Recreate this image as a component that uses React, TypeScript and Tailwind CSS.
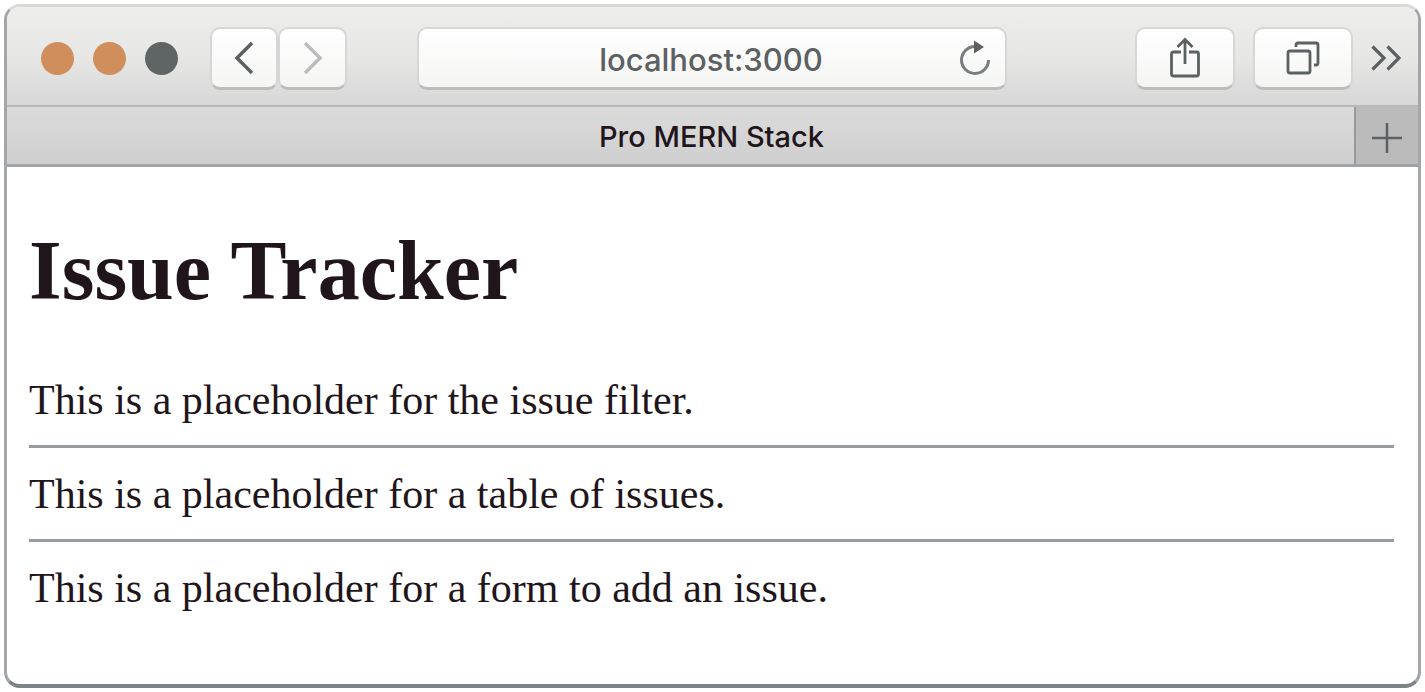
import { useState } from 'react';

const toolButton =
  'flex h-[63px] items-center justify-center rounded-[10px] border-2 border-b-[3px] border-[#d6d6d6] border-b-[#bcbcbc] bg-gradient-to-b from-white to-[#f5f5f4]';

function BackIcon() {
  return (
    <svg width="20" height="34" viewBox="0 0 20 34" fill="none" stroke="#5b6062" strokeWidth="3.500" aria-hidden="true">
      <path d="M18 2 3 17l15 15" />
    </svg>
  );
}

function ForwardIcon() {
  return (
    <svg width="20" height="34" viewBox="0 0 20 34" fill="none" stroke="#bcbcbc" strokeWidth="3.500" aria-hidden="true">
      <path d="m2 2 15 15L2 32" />
    </svg>
  );
}

function ReloadIcon() {
  return (
    <svg width="32" height="38" viewBox="0 0 32 38" aria-hidden="true">
      <path d="M16 7.500A13.500 13.500 0 1 0 29.500 21" fill="none" stroke="#777c7f" strokeWidth="3" />
      <path d="M15 1.500v13l10-6.500z" fill="#5b6062" />
    </svg>
  );
}

function ShareIcon() {
  return (
    <svg width="32" height="42" viewBox="0 0 32 42" fill="none" stroke="#5b6062" strokeWidth="2.800" aria-hidden="true">
      <path d="M12 15H4.500q-2 0-2 2v20q0 2 2 2h23q2 0 2-2V17q0-2-2-2H20" />
      <path d="M16 27V2M8.500 10 16 2.500l7.500 7.500" />
    </svg>
  );
}

function TabsIcon() {
  return (
    <svg width="34" height="34" viewBox="0 0 34 34" fill="none" stroke="#5b6062" strokeWidth="2.800" aria-hidden="true">
      <rect x="2" y="10" width="22" height="22" rx="2" />
      <path d="M10 6V4q0-2 2-2h18q2 0 2 2v18q0 2-2 2h-2" />
    </svg>
  );
}

function MoreIcon() {
  return (
    <svg width="30" height="26" viewBox="0 0 30 26" fill="none" stroke="#5b6062" strokeWidth="3.200" aria-hidden="true">
      <path d="m1.500 1.500 11.500 11.500L1.500 24.500M16.500 1.500 28 13 16.500 24.500" />
    </svg>
  );
}

function Toolbar() {
  const [address, setAddress] = useState('localhost:3000');
  return (
    <header className="flex h-[100px] items-center border-b-2 border-[#b9b9b9] bg-gradient-to-b from-[#ededec] via-[#e7e7e6] to-[#d7d7d7] pl-[34px] pr-[17px] pt-[4px]">
      <div className="flex gap-[19px]">
        <button aria-label="Close" className="size-[33px] rounded-full bg-[#d08e5c]" />
        <button aria-label="Minimize" className="size-[33px] rounded-full bg-[#d08e5c]" />
        <button aria-label="Zoom" className="size-[33px] rounded-full bg-[#5f6465]" />
      </div>
      <nav className="ml-8 flex">
        <button aria-label="Back" className={`${toolButton} w-[68px]`}>
          <BackIcon />
        </button>
        <button aria-label="Forward" className={`${toolButton} w-[69px]`}>
          <ForwardIcon />
        </button>
      </nav>
      <div className={`${toolButton} ml-[70px] mr-32 min-w-0 flex-1 pl-[46px] pr-3`}>
        <input
          aria-label="Address"
          value={address}
          onChange={(e) => setAddress(e.target.value)}
          className="min-w-0 flex-1 bg-transparent pt-1 text-center text-[31px] font-medium leading-10 text-[#5b6062] outline-none"
        />
        <button aria-label="Reload" className="flex w-9 justify-center">
          <ReloadIcon />
        </button>
      </div>
      <div className="flex items-center gap-[18px]">
        <button aria-label="Share" className={`${toolButton} w-[100px]`}>
          <ShareIcon />
        </button>
        <button aria-label="Show all tabs" className={`${toolButton} w-[100px]`}>
          <TabsIcon />
        </button>
        <button aria-label="More tools">
          <MoreIcon />
        </button>
      </div>
    </header>
  );
}

function TabBar() {
  return (
    <div className="flex h-[60px] border-b-[3px] border-[#a0a3a5] bg-gradient-to-b from-[#dbdbdb] to-[#cfcfcf]">
      <button className="flex-1 pl-[62px] pt-[2px] text-center text-[29px] font-medium leading-9 text-[#1f151b]">
        Pro MERN Stack
      </button>
      <button
        aria-label="New tab"
        className="flex w-16 items-center justify-center border-l-2 border-[#959a9d] bg-[#bbbbbb] pt-[4px]"
      >
        <svg width="30" height="30" viewBox="0 0 30 30" stroke="#5b6062" strokeWidth="2.500" aria-hidden="true">
          <path d="M15 0v30M0 15h30" />
        </svg>
      </button>
    </div>
  );
}

export default function App() {
  return (
    <div className="min-h-screen bg-white px-1 pb-1 pt-1 font-['Inter',sans-serif]">
      <div className="overflow-hidden rounded-[16px] border-[3px] border-b-4 border-[#a3a7aa] border-b-[#7e8386] border-t-[#d9d9d9] bg-white">
        <Toolbar />
        <TabBar />
        <main className="pb-[72px] pl-[22px] pr-6 pt-14 font-['Liberation_Serif',serif] text-[42px] leading-[48px] text-[#1f151b]">
          <h1 className="mb-[57px] text-[84px] font-bold leading-[96px]">Issue Tracker</h1>
          <p>This is a placeholder for the issue filter.</p>
          <hr className="mb-[22px] mt-[21px] border-t-[3px] border-[#979ca0]" />
          <p>This is a placeholder for a table of issues.</p>
          <hr className="mb-[22px] mt-[21px] border-t-[3px] border-[#979ca0]" />
          <p>This is a placeholder for a form to add an issue.</p>
        </main>
      </div>
    </div>
  );
}
